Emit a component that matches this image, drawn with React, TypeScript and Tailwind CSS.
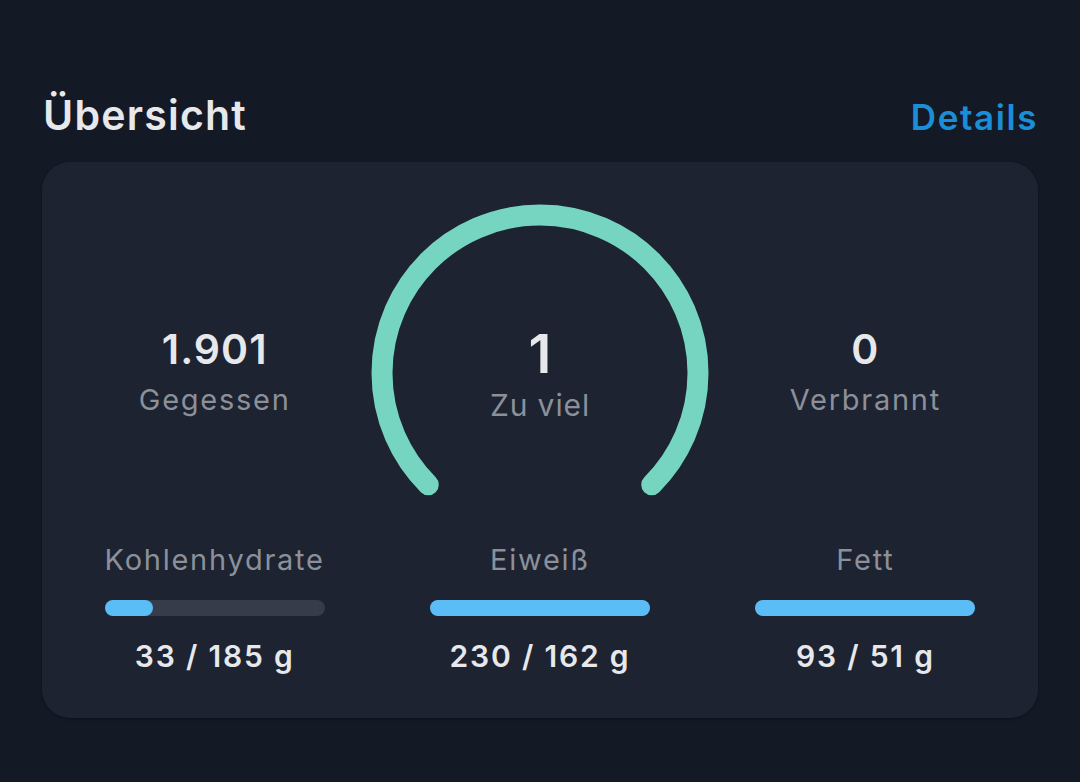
import React from "react";

const macros = [
  { label: "Kohlenhydrate", value: "33 / 185 g", fill: 48 },
  { label: "Eiweiß", value: "230 / 162 g", fill: 220 },
  { label: "Fett", value: "93 / 51 g", fill: 220 },
];

function Gauge() {
  const cx = 170;
  const cy = 170;
  const r = 158;
  // angles measured from top, clockwise
  const p = (deg: number) => {
    const a = (deg * Math.PI) / 180;
    return [cx + r * Math.sin(a), cy - r * Math.cos(a)];
  };
  const [x1, y1] = p(225);
  const [x2, y2] = p(135);
  const d = `M ${x1} ${y1} A ${r} ${r} 0 1 1 ${x2} ${y2}`;
  return (
    <div className="relative w-[340px] h-[300px]">
      <svg width="340" height="300" viewBox="0 0 340 300">
        <path d={d} fill="none" stroke="#76d5c1" strokeWidth="21" strokeLinecap="round" />
      </svg>
      <div className="absolute left-0 right-0 top-[118px] flex flex-col items-center">
        <div className="text-[54px] font-semibold text-[#e6e8eb] leading-[1.21]">1</div>
        <div className="mt-[1px] text-[30px] tracking-[0.03em] text-[#8b909a] leading-[1.21]">Zu viel</div>
      </div>
    </div>
  );
}

function Side({ value, label }: { value: string; label: string }) {
  return (
    <div className="flex flex-col items-center pt-[122px]">
      <div className="text-[41px] font-semibold tracking-[0.025em] text-[#e6e8eb] leading-[1.21]">{value}</div>
      <div className="mt-[8px] text-[29px] tracking-[0.06em] text-[#8b909a] leading-[1.21]">{label}</div>
    </div>
  );
}

export default function App() {
  return (
    <div
      className="min-h-[782px] w-[1080px] bg-[#131a26] px-[42px] pt-[91px]"
      style={{ fontFamily: "Inter, 'Noto Sans', sans-serif" }}
    >
      <div className="flex items-baseline justify-between">
        <h1 className="text-[41px] font-semibold tracking-[0.03em] text-[#e6e8eb] leading-[1.21] pl-[1px]">Übersicht</h1>
        <span className="text-[35px] font-semibold tracking-[0.045em] text-[#1b8ed8] leading-[1.21]">Details</span>
      </div>
      <div className="mt-[21px] rounded-[28px] bg-[#1d2330] px-[10px] pt-[41px] pb-[44px] shadow-[0_1px_3px_rgba(0,0,0,0.35)]">
        <div className="grid grid-cols-3">
          <Side value="1.901" label="Gegessen" />
          <div className="flex justify-center">
            <Gauge />
          </div>
          <Side value="0" label="Verbrannt" />
        </div>
        <div className="mt-[39px] grid grid-cols-3">
          {macros.map((m) => (
            <div key={m.label} className="flex flex-col items-center">
              <div className="text-[29px] tracking-[0.06em] text-[#8b909a] leading-[1.21]">{m.label}</div>
              <div className="mt-[23px] h-[16px] w-[220px] rounded-full bg-[#363c4a]">
                <div className="h-full rounded-full bg-[#5bbdf6]" style={{ width: m.fill }} />
              </div>
              <div className="mt-[22px] text-[30px] font-semibold tracking-[0.06em] text-[#e6e8eb] leading-[1.21]">{m.value}</div>
            </div>
          ))}
        </div>
      </div>
    </div>
  );
}
